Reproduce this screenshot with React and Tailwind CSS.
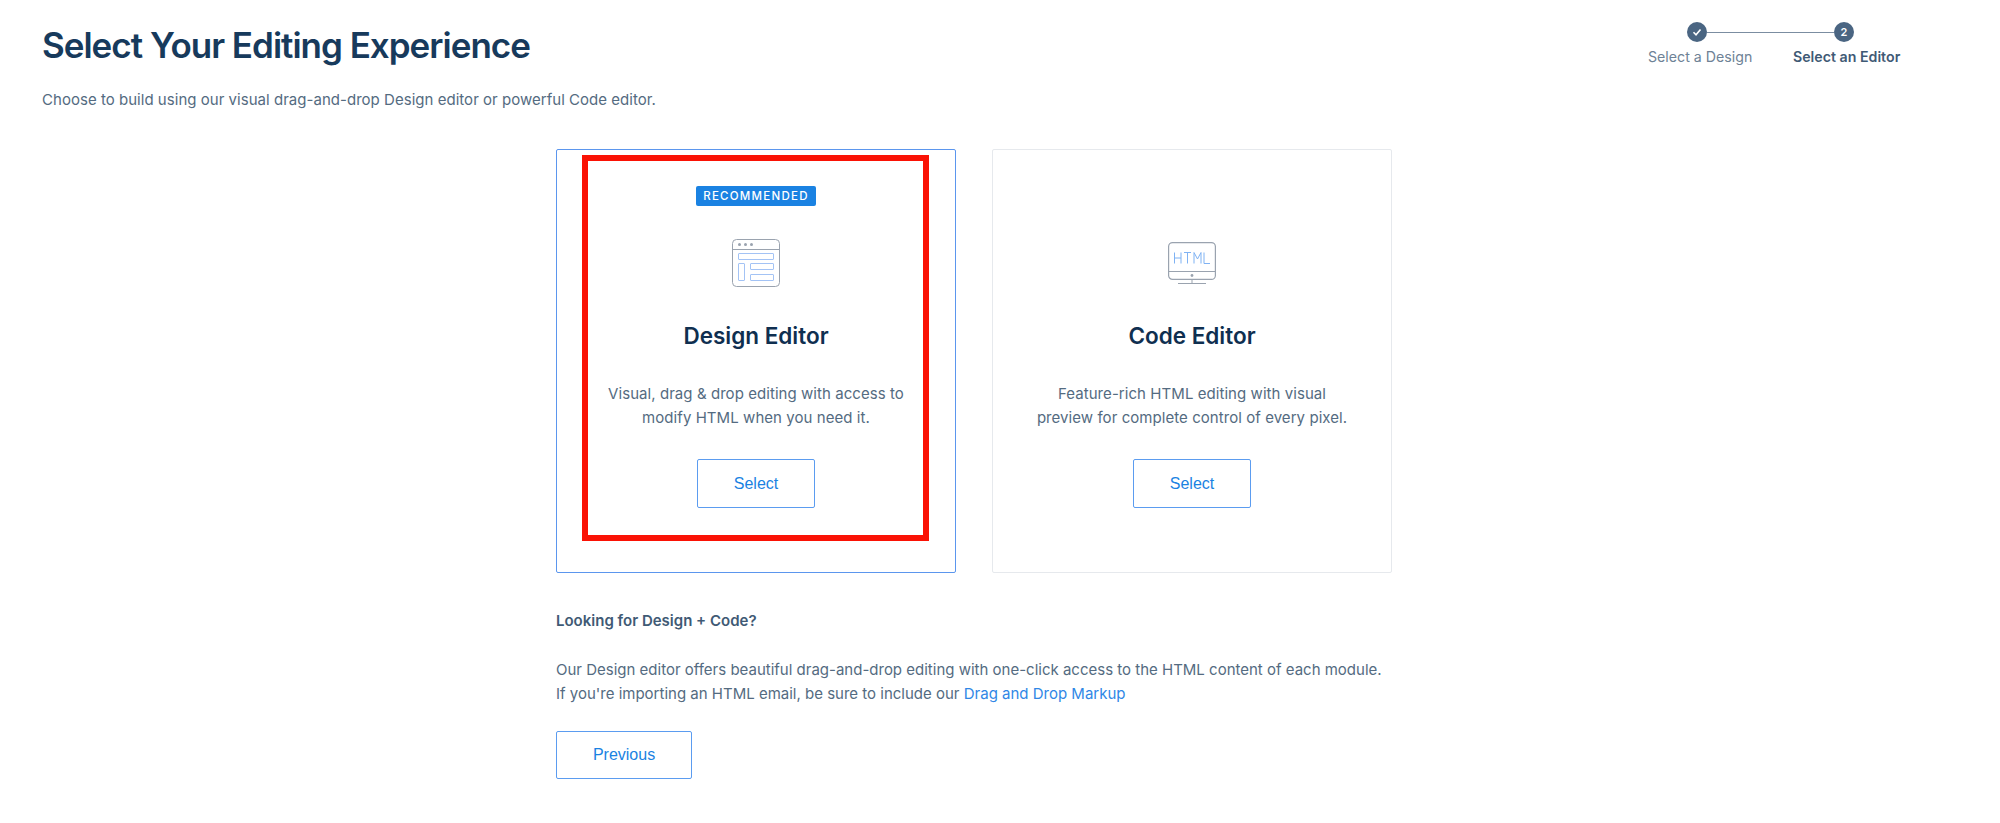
import React from "react";

function DesignIcon() {
  return (
    <svg width="48" height="48" viewBox="0 0 48 48" fill="none">
      <rect x="0.5" y="0.5" width="47" height="47" rx="4" stroke="#9aa3af" />
      <path d="M0.5 10.5H47.5" stroke="#9aa3af" />
      <circle cx="7.5" cy="5.5" r="1.5" fill="#9aa3af" />
      <circle cx="13.5" cy="5.5" r="1.5" fill="#9aa3af" />
      <circle cx="19.5" cy="5.5" r="1.5" fill="#9aa3af" />
      <rect x="6.5" y="14.5" width="35" height="6" rx="0.5" stroke="#a3c3f5" />
      <rect x="6.5" y="24.5" width="6" height="17" rx="0.5" stroke="#a3c3f5" />
      <rect x="18.5" y="24.5" width="23" height="6" rx="0.5" stroke="#a3c3f5" />
      <rect x="18.5" y="35.5" width="23" height="6" rx="0.5" stroke="#a3c3f5" />
    </svg>
  );
}

function CodeIcon() {
  return (
    <svg width="48" height="48" viewBox="0 0 48 48" fill="none">
      <rect x="0.6" y="3.6" width="46.8" height="36.8" rx="4" stroke="#9aa3af" strokeWidth="1.2" />
      <path d="M1 32.5H47" stroke="#9aa3af" />
      <circle cx="24" cy="36.5" r="1.4" fill="#9aa3af" />
      <path d="M24 41V44.5M10 44.5H38" stroke="#9aa3af" />
      <path
        d="M6.5 13.5V24.5M13 13.5V24.5M6.5 19H13M16 13.5H23M19.5 13.5V24.5M26 24.5V13.5L29.5 20L33 13.5V24.5M36 13.5V24.5H42"
        stroke="#7fb2f3"
        strokeWidth="1"
      />
    </svg>
  );
}

function Card({ active, badge, icon, title, lines }) {
  return (
    <div
      className={`relative w-[400px] h-[424px] rounded-[2px] border flex flex-col items-center ${
        active ? "border-[#5b96ee]" : "border-[#e6e9ed]"
      }`}
    >
      <div className="h-[36px] mt-[36px] flex items-start">
        {badge && (
          <span className="h-[20px] w-[120px] rounded-[2px] bg-[#1a82e2] text-white text-[11.5px] font-medium tracking-[1.25px] leading-[20px] text-center">
            RECOMMENDED
          </span>
        )}
      </div>
      <div className="h-[48px] mt-[17px] flex items-center justify-center">{icon}</div>
      <h2 className="mt-[34px] text-[22.5px] leading-[30px] font-semibold text-[#0f2f50]">{title}</h2>
      <p className="mt-[31px] text-[15px] tracking-[0.06px] leading-[24px] text-[#546b81] text-center whitespace-nowrap">
        {lines[0]}
        <br />
        {lines[1]}
      </p>
      <button
        className="mt-[29px] w-[118px] h-[49px] rounded-[2px] border border-[#5b9cf0] text-[#1a82e2] text-[16px] bg-white"
        style={{ fontFamily: '"Liberation Sans", Arial, sans-serif' }}
      >
        Select
      </button>
      {active && (
        <div className="absolute left-[25px] top-[5px] w-[347px] h-[386px] border-[6px] border-[#fa1205] pointer-events-none" />
      )}
    </div>
  );
}

export default function App() {
  return (
    <div
      className="min-h-[823px] bg-white pl-[42px] pr-[97px] text-[#546b81]"
      style={{ fontFamily: 'Inter, "Noto Sans", sans-serif' }}
    >
      <header className="flex justify-between items-start h-[149px]">
        <div>
          <h1 className="mt-[23px] text-[35px] leading-[44px] font-semibold tracking-[-1px] text-[#173a5c]">
            Select Your Editing Experience
          </h1>
          <p className="mt-[21px] text-[15px] tracking-[0.03px] leading-[24px] text-[#546b81]">
            Choose to build using our visual drag-and-drop Design editor or powerful Code editor.
          </p>
        </div>
        <div className="mt-[22px] w-[255px] flex flex-col">
          <div className="relative flex items-center pl-[39px]">
            <span className="w-[20px] h-[20px] rounded-full bg-[#4a6582] flex items-center justify-center">
              <svg width="10" height="10" viewBox="0 0 10 10" fill="none">
                <path d="M1.5 5.3L4 7.8L8.5 2.5" stroke="white" strokeWidth="1.6" />
              </svg>
            </span>
            <span className="w-[127px] h-[1px] bg-[#7b8da1]" />
            <span className="w-[20px] h-[20px] rounded-full bg-[#4a6582] text-white text-[11px] font-semibold flex items-center justify-center">
              2
            </span>
          </div>
          <div className="mt-[3px] flex text-[14.2px] leading-[24px] whitespace-nowrap">
            <span className="w-[145px] text-[#6e8296]">Select a Design</span>
            <span className="font-semibold text-[#3f5a75]">Select an Editor</span>
          </div>
        </div>
      </header>

      <main className="ml-[514px] w-[836px]">
        <div className="flex gap-[36px]">
          <Card
            active
            badge
            icon={<DesignIcon />}
            title="Design Editor"
            lines={["Visual, drag & drop editing with access to", "modify HTML when you need it."]}
          />
          <Card
            icon={<CodeIcon />}
            title="Code Editor"
            lines={["Feature-rich HTML editing with visual", "preview for complete control of every pixel."]}
          />
        </div>
        <p className="mt-[36px] text-[15px] leading-[24px] font-semibold text-[#3f5a75]">Looking for Design + Code?</p>
        <p className="mt-[25px] text-[15px] leading-[24px] text-[#546b81] whitespace-nowrap">
          Our Design editor offers beautiful drag-and-drop editing with one-click access to the HTML content of each module.
          <br />
          If you're importing an HTML email, be sure to include our{" "}
          <a className="text-[#2f87e6]">Drag and Drop Markup</a>
        </p>
        <button
          className="mt-[25px] w-[136px] h-[48px] rounded-[2px] border border-[#5b9cf0] text-[#1a82e2] text-[16px] bg-white"
          style={{ fontFamily: '"Liberation Sans", Arial, sans-serif' }}
        >
          Previous
        </button>
      </main>
    </div>
  );
}
